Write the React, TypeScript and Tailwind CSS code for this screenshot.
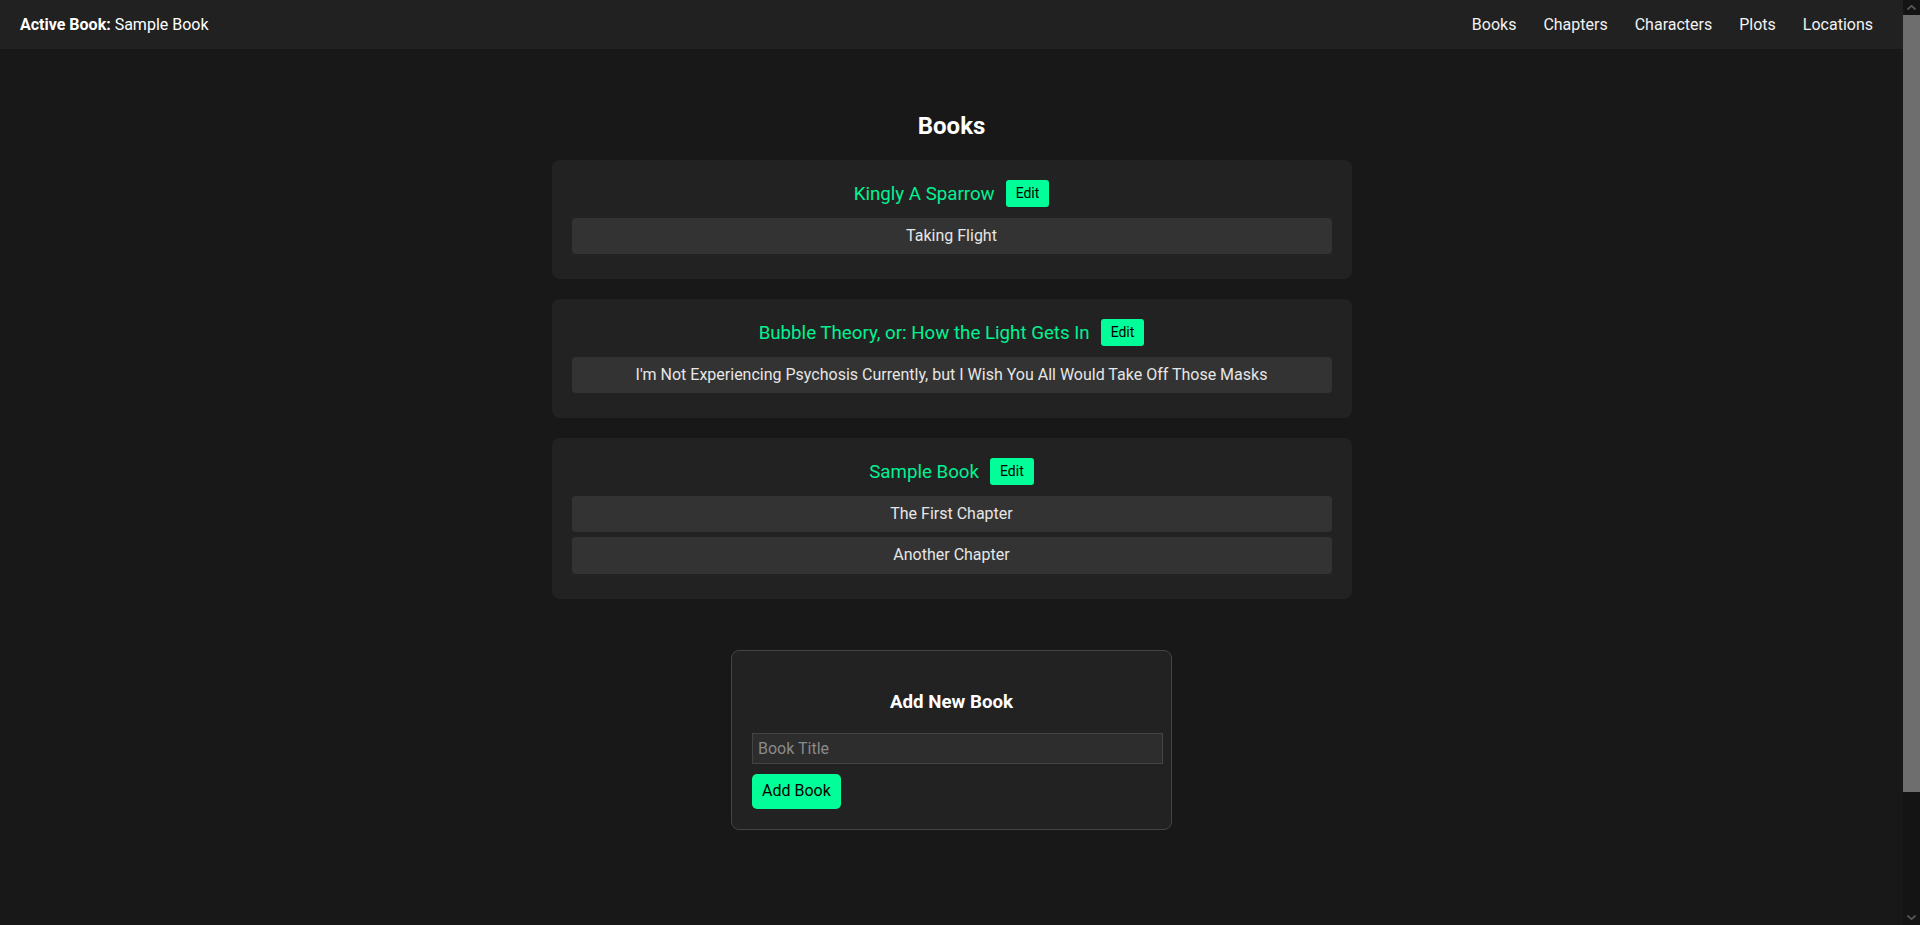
import React from 'react';

interface Book {
  title: string;
  chapters: string[];
}

const books: Book[] = [
  { title: 'Kingly A Sparrow', chapters: ['Taking Flight'] },
  {
    title: 'Bubble Theory, or: How the Light Gets In',
    chapters: ["I'm Not Experiencing Psychosis Currently, but I Wish You All Would Take Off Those Masks"],
  },
  { title: 'Sample Book', chapters: ['The First Chapter', 'Another Chapter'] },
];

const navLinks = ['Books', 'Chapters', 'Characters', 'Plots', 'Locations'];

function BookCard({ book }: { book: Book }) {
  return (
    <div className="w-[800px] rounded-lg bg-[#222222] p-5">
      <div className="flex h-[27.5px] items-center justify-center">
        <h3 className="text-[18.72px] leading-[28px] text-[#00f294]">{book.title}</h3>
        <button className="ml-[11px] h-[27px] rounded-[3px] bg-[#00ff99] px-[10px] text-[14px] text-black">
          Edit
        </button>
      </div>
      <ul className="mt-[10px] flex flex-col gap-[5px] pb-[5px]">
        {book.chapters.map((ch) => (
          <li
            key={ch}
            className="flex h-[36.5px] items-center justify-center rounded bg-[#333333] text-[16px] text-[#e6e6e6]"
          >
            {ch}
          </li>
        ))}
      </ul>
    </div>
  );
}

// window scrollbar as the reference shows it (the headless browser hides its own)
function FakeScrollbar() {
  return (
    <div className="fixed right-0 top-0 flex h-screen w-[17px] flex-col bg-[#141414]">
      <div className="flex h-[15px] items-center justify-center">
        <svg width="9" height="5" viewBox="0 0 9 5">
          <path d="M0.5 4.5 L4.5 0.8 L8.5 4.5" fill="none" stroke="#5a5a5a" strokeWidth="1.6" />
        </svg>
      </div>
      <div className="h-[777px] bg-[#6e6e6e]" />
      <div className="flex-1" />
      <div className="flex h-[15px] items-center justify-center">
        <svg width="9" height="5" viewBox="0 0 9 5">
          <path d="M0.5 0.5 L4.5 4.2 L8.5 0.5" fill="none" stroke="#5a5a5a" strokeWidth="1.6" />
        </svg>
      </div>
    </div>
  );
}

export default function App() {
  return (
    <div className="min-h-screen bg-[#181818] pr-[17px] font-['Segoe_UI',Roboto,'Noto_Sans',sans-serif] text-white">
      <style>{'html{color-scheme:dark;background:#181818}'}</style>
      <nav className="flex h-[49px] items-center justify-between bg-[#212121] pl-5 pr-[30px] text-[16px]">
        <div>
          <span className="font-bold">Active Book:</span> Sample Book
        </div>
        <div className="flex gap-[27px]">
          {navLinks.map((link) => (
            <a key={link} href="#" className="text-[#f2f2f2]">
              {link}
            </a>
          ))}
        </div>
      </nav>

      <main className="flex flex-col items-center pb-[237px] pt-[61px]">
        <h2 className="mb-[18px] h-[32px] text-[24px] font-bold leading-[32px]">Books</h2>
        <div className="flex flex-col gap-5">
          {books.map((book) => (
            <BookCard key={book.title} book={book} />
          ))}
        </div>

        <div className="mt-[51px] w-[441px] rounded-lg border border-[#444444] bg-[#222222] px-5 pb-5 pt-5">
          <h3 className="my-[18px] text-center text-[18.72px] font-bold leading-[26px]">Add New Book</h3>
          <input
            type="text"
            placeholder="Book Title"
            className="block h-[31px] w-[411px] border border-[#444444] bg-[#2d2d2d] px-[5px] text-[16px] text-white outline-none placeholder:text-[#8a8a8a]"
          />
          <button className="mt-[10px] h-[35px] rounded-[5px] bg-[#00ff99] px-[10px] text-[16px] text-black">
            Add Book
          </button>
        </div>
      </main>

      <FakeScrollbar />
    </div>
  );
}
